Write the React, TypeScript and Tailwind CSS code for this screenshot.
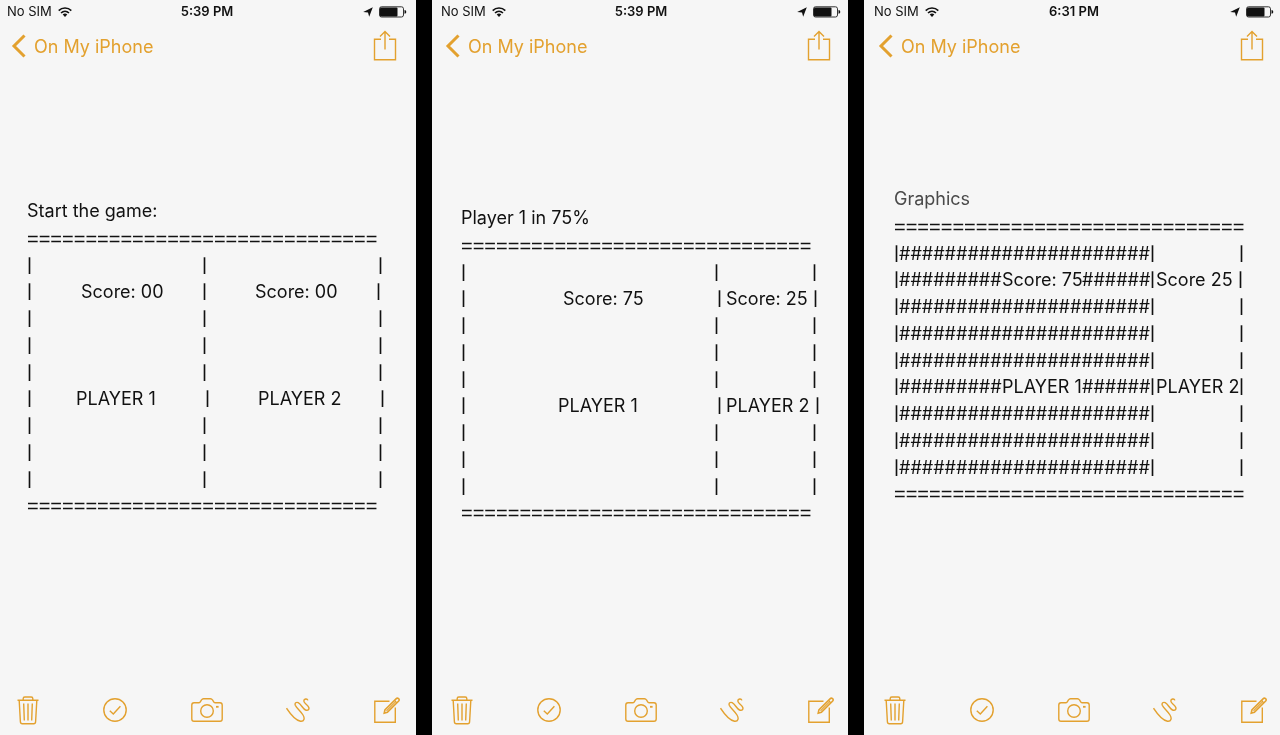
import React from "react";

type Segment = { text: string; width?: string };
type Row = Segment[];

type Note = {
  id: string;
  time: string;
  shift: string;
  top: string;
  title: string;
  titleColor: string;
  rows: Row[];
};

const RULE = "=".repeat(30);

function repeatRow(count: number, row: Row): Row[] {
  return Array.from({ length: count }, () => row);
}

const evenEmpty: Row = [
  { text: "|", width: "w-[175px]" },
  { text: "|", width: "w-[176px]" },
  { text: "|" },
];

const wideEmpty: Row = [
  { text: "|", width: "w-[253px]" },
  { text: "|", width: "w-[98px]" },
  { text: "|" },
];

const filledEmpty: Row = [
  { text: "|", width: "w-[5px]" },
  { text: "#".repeat(22), width: "w-[251px]" },
  { text: "|", width: "w-[89px]" },
  { text: "|" },
];

const notes: Note[] = [
  {
    id: "start",
    time: "5:39 PM",
    shift: "",
    top: "pt-[129px]",
    title: "Start the game:",
    titleColor: "text-[#111]",
    rows: [
      evenEmpty,
      [
        { text: "|", width: "w-[54px]" },
        { text: "Score: 00", width: "w-[121px]" },
        { text: "|", width: "w-[53px]" },
        { text: "Score: 00", width: "w-[121px]" },
        { text: "|" },
      ],
      ...repeatRow(3, evenEmpty),
      [
        { text: "|", width: "w-[49px]" },
        { text: "PLAYER 1", width: "w-[129px]" },
        { text: "|", width: "w-[53px]" },
        { text: "PLAYER 2", width: "w-[122px]" },
        { text: "|" },
      ],
      ...repeatRow(3, evenEmpty),
    ],
  },
  {
    id: "lead",
    time: "5:39 PM",
    shift: "ml-[2px] -mr-[2px]",
    top: "pt-[136px]",
    title: "Player 1 in 75%",
    titleColor: "text-[#111]",
    rows: [
      wideEmpty,
      [
        { text: "|", width: "w-[102px]" },
        { text: "Score: 75", width: "w-[154px]" },
        { text: "|", width: "w-[9px]" },
        { text: "Score: 25", width: "w-[87px]" },
        { text: "|" },
      ],
      ...repeatRow(3, wideEmpty),
      [
        { text: "|", width: "w-[97px]" },
        { text: "PLAYER 1", width: "w-[159px]" },
        { text: "|", width: "w-[9px]" },
        { text: "PLAYER 2", width: "w-[89px]" },
        { text: "|" },
      ],
      ...repeatRow(3, wideEmpty),
    ],
  },
  {
    id: "graphics",
    time: "6:31 PM",
    shift: "ml-[3px] -mr-[3px]",
    top: "pt-[117px]",
    title: "Graphics",
    titleColor: "text-[#4a4a4a]",
    rows: [
      filledEmpty,
      [
        { text: "|", width: "w-[5px]" },
        { text: "#########", width: "w-[103px]" },
        { text: "Score: 75", width: "w-[80px]" },
        { text: "######", width: "w-[68px]" },
        { text: "|", width: "w-[6px]" },
        { text: "Score 25", width: "w-[82px]" },
        { text: "|" },
      ],
      ...repeatRow(3, filledEmpty),
      [
        { text: "|", width: "w-[5px]" },
        { text: "#########", width: "w-[103px]" },
        { text: "PLAYER 1", width: "w-[80px]" },
        { text: "######", width: "w-[68px]" },
        { text: "|", width: "w-[6px]" },
        { text: "PLAYER 2", width: "w-[83px]" },
        { text: "|" },
      ],
      ...repeatRow(3, filledEmpty),
    ],
  },
];

function WifiIcon() {
  return (
    <svg width="14" height="10" viewBox="0 0 14 10" aria-hidden="true">
      <g fill="none" stroke="#111" strokeWidth="1.6">
        <path d="M.7 3.6C4.2.1 9.8.1 13.300 3.600" />
        <path d="M3 6C5.300 3.800 8.700 3.800 11 6" />
      </g>
      <path d="M4.700 7.500C6 6.300 8 6.300 9.300 7.500L7 9.900Z" fill="#111" />
    </svg>
  );
}

function LocationIcon() {
  return (
    <svg width="10" height="10" viewBox="0 0 10 10" aria-hidden="true">
      <path d="M9.800.2 6.200 9.800 5 5.400.2 5Z" fill="#111" />
    </svg>
  );
}

function BatteryIcon() {
  return (
    <svg width="28" height="12" viewBox="0 0 28 12" aria-hidden="true">
      <rect x=".5" y=".8" width="24" height="10.200" rx="2" fill="none" stroke="#333" strokeWidth="1" />
      <rect x="1" y="1.500" width="17.500" height="9" rx="1" fill="#111" />
      <path d="M25.500 4q1.800.3 1.800 1.900t-1.800 1.900Z" fill="#111" />
    </svg>
  );
}

const line = {
  fill: "none",
  stroke: "currentColor",
  strokeWidth: 1.4,
  "aria-hidden": true,
} as const;

function ShareIcon() {
  return (
    <svg width="24" height="32" viewBox="0 0 24 32" {...line}>
      <path d="M8 9.200H1.500V29.800H22.500V9.200H16" />
      <path d="M12 19.500V2M7 6.500 12 1.400 17 6.500" />
    </svg>
  );
}

function TrashIcon() {
  return (
    <svg width="22" height="30" viewBox="0 0 22 30" {...line}>
      <path d="M.5 5.200H21.500M6.200 5V3.400Q6.200 2 7.800 2H14.200Q15.800 2 15.800 3.400V5" />
      <path d="M2.200 5.500 3.400 26.800Q3.500 28.800 5.300 28.800H16.700Q18.500 28.800 18.600 26.800L19.800 5.500" />
      <path d="M6.700 8.500 7.300 25.500M11 8.500V25.500M15.300 8.500 14.700 25.500" />
    </svg>
  );
}

function CheckIcon() {
  return (
    <svg width="24" height="24" viewBox="0 0 24 24" {...line}>
      <circle cx="12" cy="12" r="11.200" />
      <path d="M6.800 12.800 10.300 16 17.400 8.300" />
    </svg>
  );
}

function CameraIcon() {
  return (
    <svg width="32" height="24" viewBox="0 0 32 24" {...line}>
      <path d="M3 4.800H7.500Q8.700 4.800 9.300 3.800L10.500 2Q11.200.8 12.500.8H19.500Q20.800.8 21.500 2L22.700 3.800Q23.300 4.800 24.500 4.800H29Q31.200 4.800 31.200 7V21Q31.200 23.200 29 23.200H3Q.8 23.200.8 21V7Q.8 4.800 3 4.800Z" />
      <circle cx="16" cy="13" r="6.300" />
      <path d="M25 8.800H27.600" strokeWidth="1.800" />
    </svg>
  );
}

function ScribbleIcon() {
  return (
    <svg width="24" height="24" viewBox="0 0 24 24" {...line}>
      <path d="M.5 10.200C4 15.500 9.500 22.500 14.500 23.200C18.300 23.600 19 20.300 17 17C14.500 13 10.500 10 9.300 7.300C8.500 5 10.300 3.800 12.200 4.700C15.500 6.300 16.800 11.500 20 12.200C22.700 12.600 23.700 10.600 22.300 8.600C21 6.700 17.900 5.200 17.800 3C17.900.8 21.200.2 21.900 2.400" />
    </svg>
  );
}

function ComposeIcon() {
  return (
    <svg width="26" height="28" viewBox="0 0 26 28" {...line}>
      <path d="M15.500 5.200H.8V26.200H21.300V11.500" />
      <path d="M10.200 17.200 10.900 14 22.300 2.600Q23.300 1.600 24.500 2.700Q25.800 3.900 24.700 5L13.400 16.400Z" strokeWidth="1.600" />
      <path d="M20.600 4.400 23 6.800M12.500 14.800 21.500 5.800" strokeWidth="1.100" />
    </svg>
  );
}

const tools = [
  { label: "Delete", Icon: TrashIcon },
  { label: "Checklist", Icon: CheckIcon },
  { label: "Camera", Icon: CameraIcon },
  { label: "Sketch", Icon: ScribbleIcon },
  { label: "New note", Icon: ComposeIcon },
];

function Rule() {
  return (
    <div className="h-0 font-['Liberation_Sans',sans-serif] text-[20px] leading-[29px] whitespace-nowrap">
      {RULE}
    </div>
  );
}

function Phone({ note }: { note: Note }) {
  return (
    <section className="min-w-0 flex-1 overflow-hidden bg-[#f6f6f6]">
      <div className={`flex min-h-screen flex-col will-change-transform ${note.shift}`}>
        <div className="grid h-6 grid-cols-[1fr_auto_1fr] items-center pr-[9px] pl-[7px] text-[13px]">
          <div className="flex items-center gap-[6px]">
            <span>No SIM</span>
            <WifiIcon />
          </div>
          <span className="font-semibold">{note.time}</span>
          <div className="flex items-center justify-end gap-[6px]">
            <LocationIcon />
            <BatteryIcon />
          </div>
        </div>
        <header className="flex h-11 items-center justify-between pr-[19px] pl-[11px] text-[#e3a12f]">
          <button type="button" className="flex items-center gap-2 text-[18px]">
            <svg width="15" height="24" viewBox="0 0 15 24" fill="none" stroke="currentColor" strokeWidth="3" aria-hidden="true">
              <path d="M13.500 1.500 3 12 13.500 22.500" />
            </svg>
            On My iPhone
          </button>
          <button type="button" aria-label="Share">
            <ShareIcon />
          </button>
        </header>
        <main className={`pl-[27px] text-[18px] leading-[27px] ${note.top}`}>
          <h1 className={`h-7 ${note.titleColor}`}>{note.title}</h1>
          <div className="grid h-[294px] grid-rows-[repeat(11,minmax(0,1fr))]">
            <Rule />
            {note.rows.map((row, i) => (
              <div key={i} className="flex whitespace-nowrap">
                {row.map((segment, j) => (
                  <span
                    key={j}
                    className={`shrink-0 ${segment.width ?? ""} ${segment.text === "|" ? "text-[14px] font-semibold" : ""}`}
                  >
                    {segment.text}
                  </span>
                ))}
              </div>
            ))}
            <Rule />
          </div>
        </main>
        <footer className="mt-auto flex h-[50px] items-center justify-between pr-4 pl-[17px] text-[#e3a12f]">
          {tools.map(({ label, Icon }) => (
            <button key={label} type="button" aria-label={label}>
              <Icon />
            </button>
          ))}
        </footer>
      </div>
    </section>
  );
}

export default function App() {
  return (
    <div className="flex min-h-screen gap-4 bg-black font-['Inter','Liberation_Sans',sans-serif] text-[#111]">
      {notes.map((note) => (
        <Phone key={note.id} note={note} />
      ))}
    </div>
  );
}
